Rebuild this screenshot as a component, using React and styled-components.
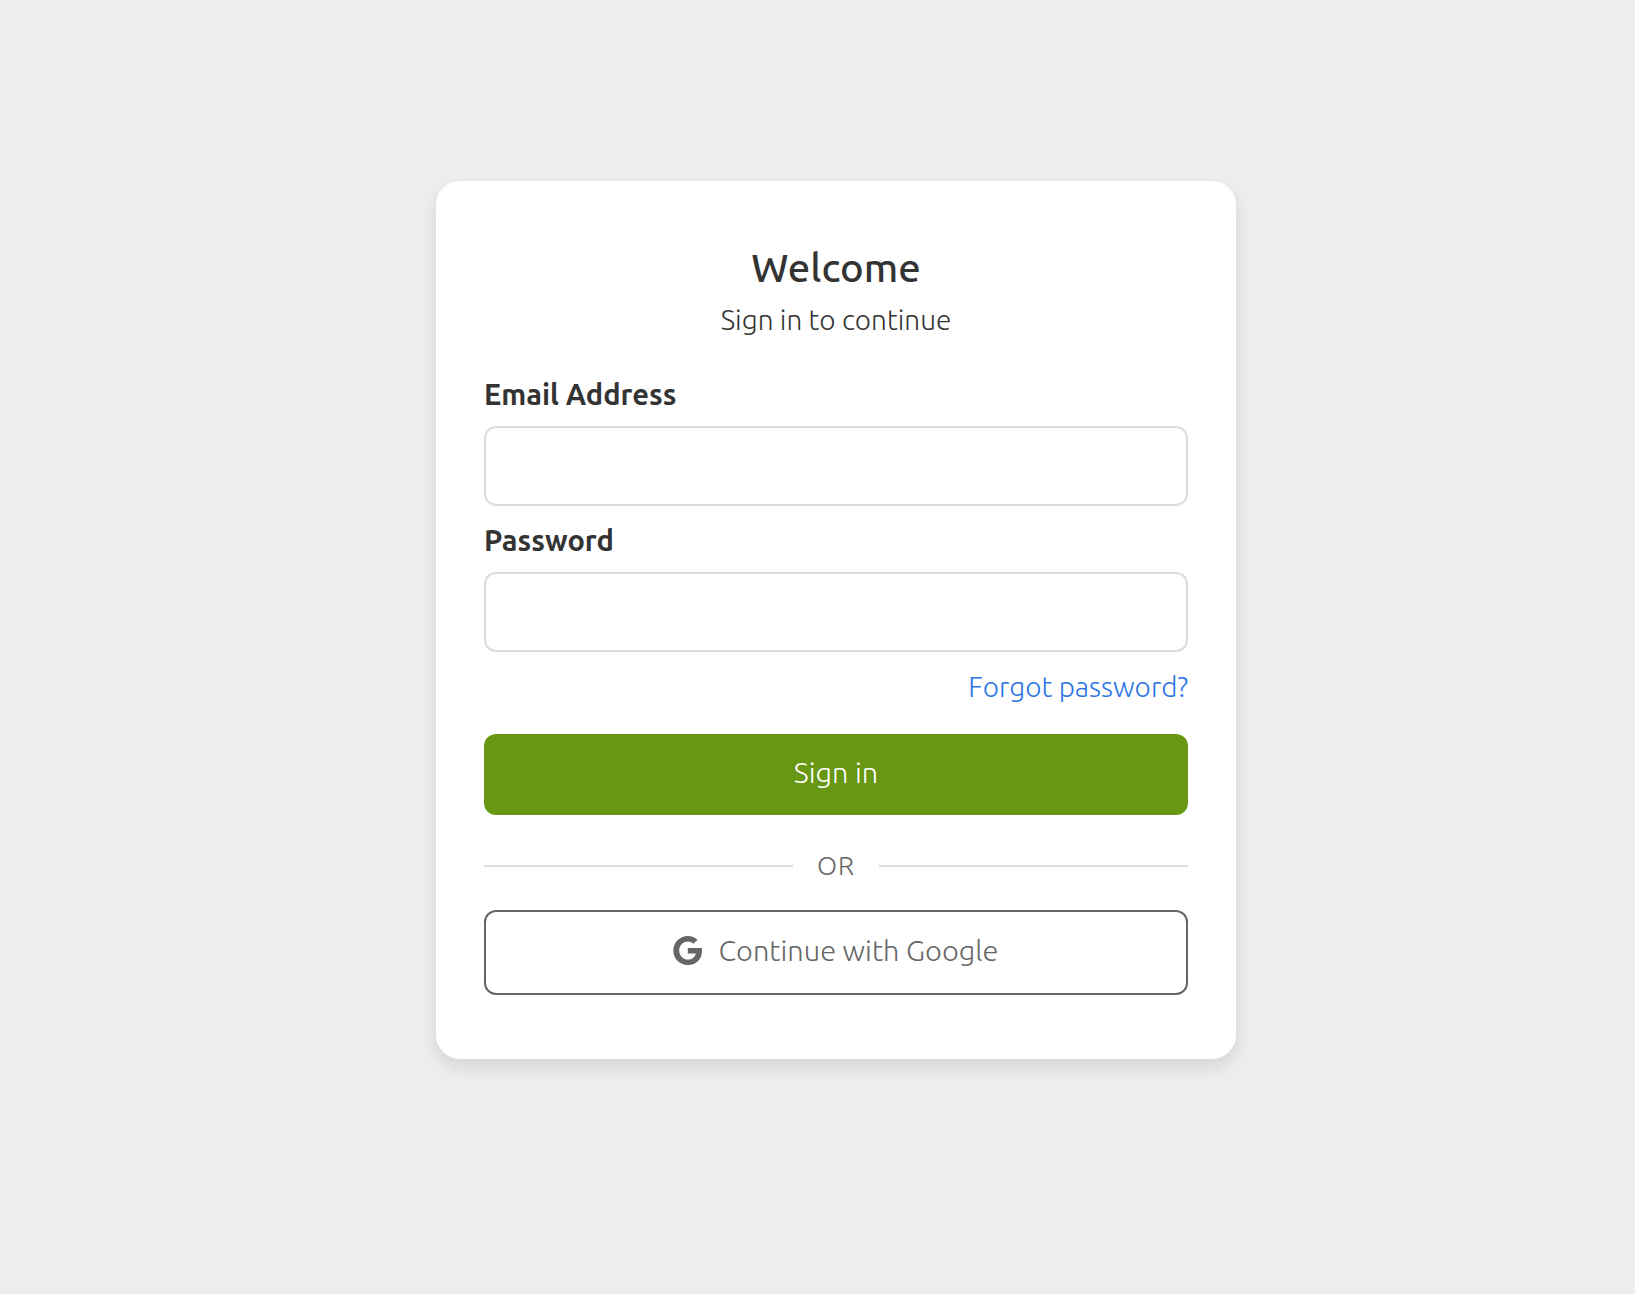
import React from "react";
import styled, { createGlobalStyle } from "styled-components";

const GlobalStyle = createGlobalStyle`
  *, *::before, *::after { box-sizing: border-box; }
  body {
    margin: 0;
    background: #ededeb;
    color: #333333;
    font-family: Ubuntu, "Open Sans", "Noto Sans", sans-serif;
    font-size: 28px;
    font-weight: 340;
    line-height: 40px;
  }
`;

const Page = styled.main`
  display: flex;
  justify-content: center;
  align-items: center;
  min-height: 100vh;
  padding: 0 0 54px 37px;
`;

const Card = styled.section`
  width: 100%;
  max-width: 800px;
  padding: 64px 48px;
  border-radius: 24px;
  background: #ffffff;
  box-shadow: 0 8px 16px rgba(0, 0, 0, 0.1);
`;

const Header = styled.header`
  display: flex;
  flex-direction: column;
  gap: 9px;
  margin-bottom: 35px;
  text-align: center;
`;

const Title = styled.h1`
  margin: 0;
  font-size: 40px;
  font-weight: 500;
  line-height: 46px;
`;

const Subtitle = styled.p`
  margin: 0;
`;

const Form = styled.form`
  display: flex;
  flex-direction: column;
`;

const Field = styled.div`
  display: flex;
  flex-direction: column;
  gap: 13px;
  margin-bottom: 15px;
`;

const Label = styled.label`
  font-size: 29px;
  font-weight: 600;
  line-height: 38px;
`;

const Input = styled.input`
  width: 100%;
  height: 80px;
  padding: 0 24px;
  border: 2px solid #dddddd;
  border-radius: 12px;
  background: #ffffff;
  color: inherit;
  font: inherit;
`;

const ForgotLink = styled.a`
  align-self: flex-end;
  margin-bottom: 27px;
  color: #2c74e4;
  text-decoration: none;
`;

const Button = styled.button`
  display: flex;
  justify-content: center;
  align-items: center;
  gap: 16px;
  width: 100%;
  padding: 18px 20px 23px;
  border: ${({ $outlined }) => ($outlined ? "2px solid #666666" : "none")};
  border-radius: 12px;
  background: ${({ $outlined }) => ($outlined ? "#ffffff" : "#679713")};
  color: ${({ $outlined }) => ($outlined ? "#666666" : "#ffffff")};
  font: inherit;
  font-size: 29px;
  cursor: pointer;
`;

const Divider = styled.div`
  display: flex;
  align-items: center;
  gap: 24px;
  margin: 31px 0 24px;
  color: #666666;
  font-size: 26px;
  letter-spacing: 1px;

  &::before,
  &::after {
    content: "";
    flex: 1;
    height: 2px;
    background: #dddddd;
  }
`;

const GoogleIcon = styled.svg`
  width: 29px;
  height: 29px;
  flex: none;
  fill: currentColor;
`;

export default function App() {
  return (
    <>
      <GlobalStyle />
      <Page>
        <Card>
          <Header>
            <Title>Welcome</Title>
            <Subtitle>Sign in to continue</Subtitle>
          </Header>
          <Form onSubmit={(event) => event.preventDefault()}>
            <Field>
              <Label htmlFor="email">Email Address</Label>
              <Input id="email" type="email" autoComplete="email" />
            </Field>
            <Field>
              <Label htmlFor="password">Password</Label>
              <Input id="password" type="password" autoComplete="current-password" />
            </Field>
            <ForgotLink href="#forgot">Forgot password?</ForgotLink>
            <Button type="submit">Sign in</Button>
          </Form>
          <Divider>OR</Divider>
          <Button type="button" $outlined>
            <GoogleIcon viewBox="0 0 29 29" aria-hidden="true">
              <path d="M14.8 12H28.7C28.9 13 29 13.9 29 15C29 23.2 23.3 29 14.8 29C6.7 29 0.3 22.6 0.3 14.5S6.7 0 14.8 0C18.7 0 22 1.4 24.5 3.8L20.5 7.7C19.4 6.6 17.5 5.4 14.8 5.4C10 5.4 6.2 9.4 6.2 14.5S10 23.6 14.8 23.6C20.3 23.6 22.4 19.8 22.7 17.4H14.8Z" />
            </GoogleIcon>
            Continue with Google
          </Button>
        </Card>
      </Page>
    </>
  );
}
